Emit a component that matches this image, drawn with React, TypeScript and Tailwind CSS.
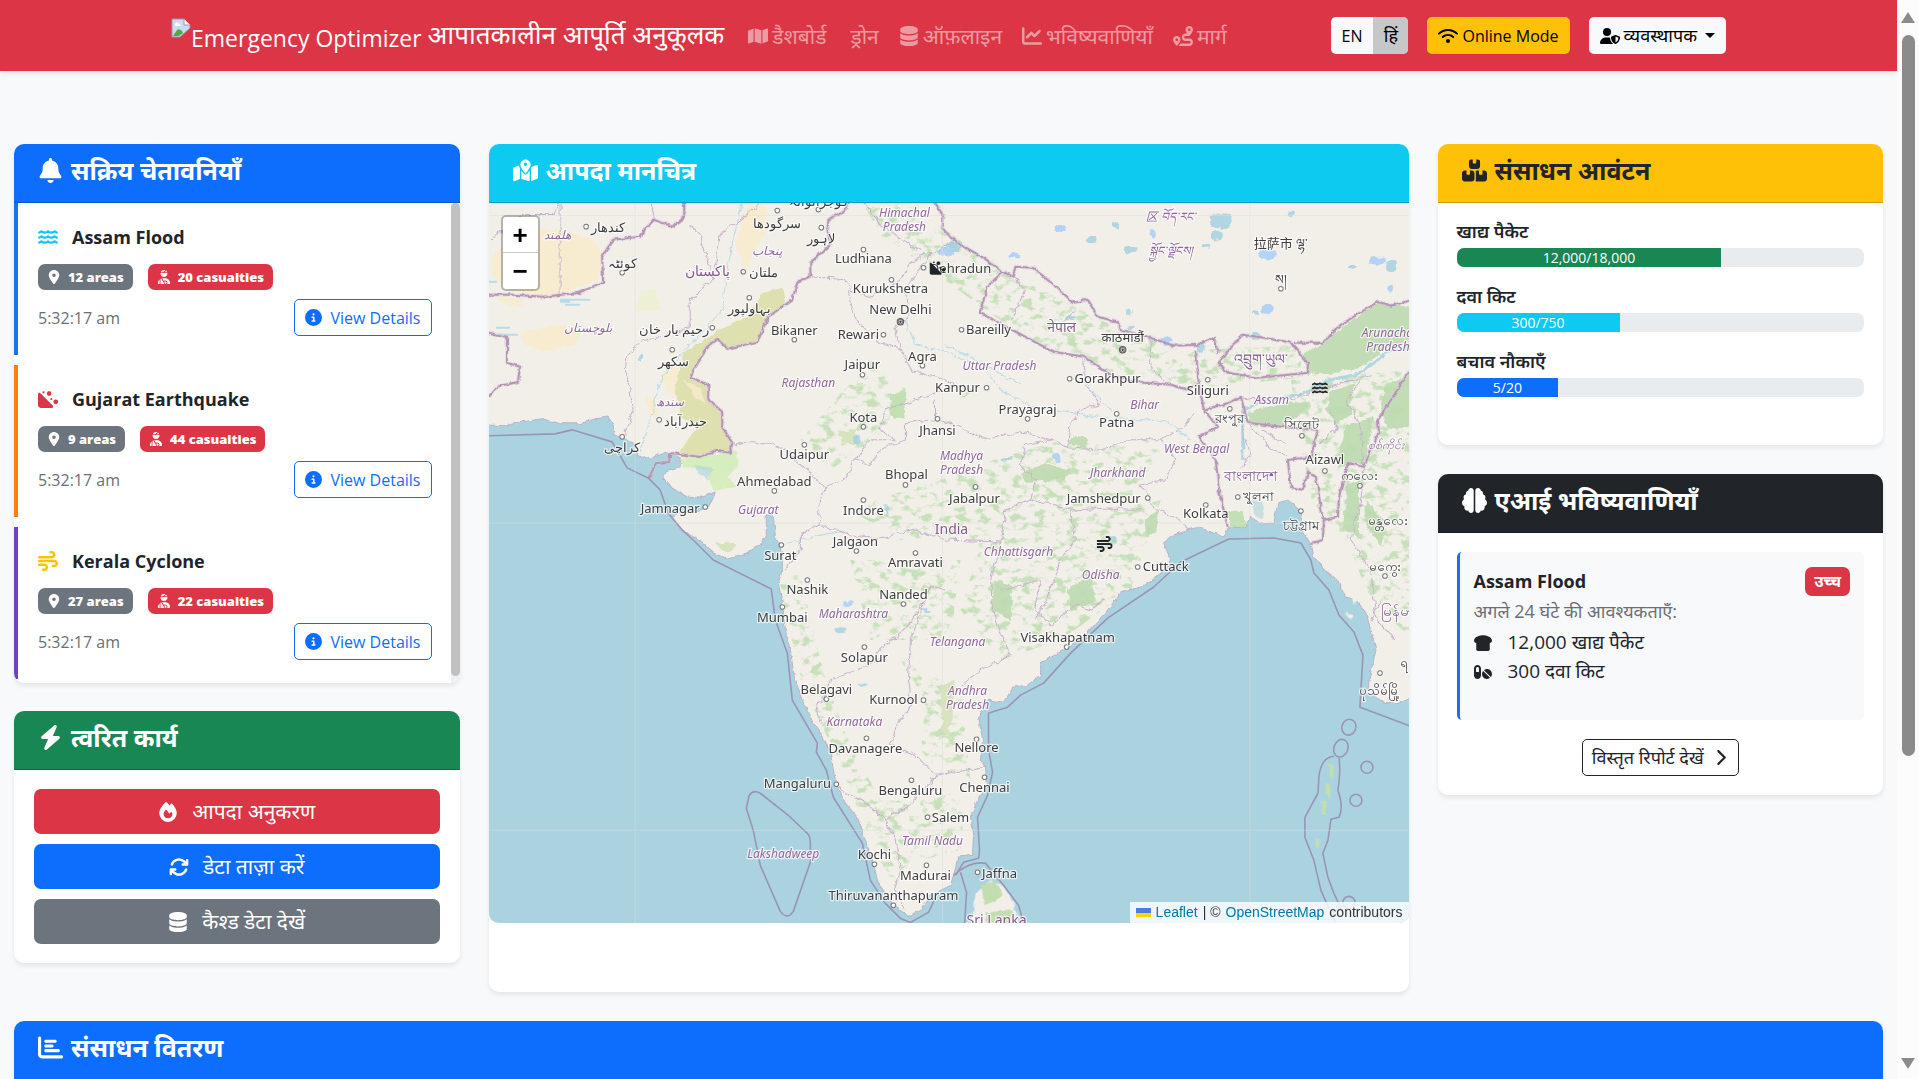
import React, { useState } from 'react';
import {
    FaArrowsRotate,
    FaBell,
    FaBolt,
    FaBoxesStacked,
    FaBrain,
    FaBreadSlice,
    FaChartBar,
    FaChartLine,
    FaChevronRight,
    FaCircleInfo,
    FaDatabase,
    FaFire,
    FaHillRockslide,
    FaLocationDot,
    FaMap,
    FaMapLocationDot,
    FaPills,
    FaRoute,
    FaUserInjured,
    FaUserShield,
    FaWater,
    FaWifi,
    FaWind
} from 'react-icons/fa6';

type LabelKind = 'city' | 'state' | 'country' | 'capital';
type MapLabel = [text: string, x: number, y: number, kind: LabelKind, dotX?: number, dotY?: number];

const mapLabels: MapLabel[] = [
    ['کندھار', 608, 228, 'city', 586, 227],
    ['هلمند', 557, 235, 'state'],
    ['کوئٹہ', 622, 264, 'city', 622, 273],
    ['پاکستان', 707, 272, 'country'],
    ['سرگودھا', 777, 224, 'city', 777, 211],
    ['گوجرانوالہ', 818, 202, 'city', 818, 210],
    ['لاہور', 821, 239, 'city', 821, 228],
    ['پنجاب', 767, 251, 'state'],
    ['ملتان', 763, 273, 'city', 743, 272],
    ['بہاولپور', 749, 309, 'city', 749, 298],
    ['رحیم یار خان', 674, 330, 'city', 712, 328],
    ['بلوچستان', 588, 328, 'state'],
    ['سکھر', 673, 362, 'city', 672, 350],
    ['سندھ', 670, 402, 'state'],
    ['حیدرآباد', 685, 422, 'city', 659, 420],
    ['کراچی', 622, 448, 'city', 622, 437],
    ['Himachal', 904, 213, 'state'],
    ['Pradesh', 904, 227, 'state'],
    ['Ludhiana', 863, 259, 'city', 863, 250],
    ['Kurukshetra', 890, 289, 'city', 891, 280],
    ['New Delhi', 900, 310, 'capital', 900, 322],
    ['Dehradun', 960, 269, 'city', 923, 268],
    ['Bikaner', 794, 331, 'city', 794, 340],
    ['Rewari', 858, 335, 'city', 883, 335],
    ['Agra', 922, 357, 'city', 922, 366],
    ['Jaipur', 862, 365, 'city', 862, 375],
    ['Rajasthan', 808, 383, 'state'],
    ['Kanpur', 957, 388, 'city', 986, 388],
    ['Kota', 863, 418, 'city', 863, 427],
    ['Jhansi', 937, 431, 'city', 937, 419],
    ['Udaipur', 804, 455, 'city', 804, 445],
    ['Madhya', 961, 456, 'state'],
    ['Pradesh', 961, 470, 'state'],
    ['Bhopal', 906, 475, 'city', 905, 485],
    ['Ahmedabad', 774, 482, 'city', 774, 491],
    ['Jamnagar', 670, 509, 'city', 705, 507],
    ['Gujarat', 758, 510, 'state'],
    ['Indore', 863, 511, 'city', 863, 500],
    ['Bareilly', 988, 330, 'city', 961, 330],
    ['नेपाल', 1061, 328, 'country'],
    ['काठमाडौं', 1122, 338, 'capital', 1122, 350],
    ['Uttar Pradesh', 999, 366, 'state'],
    ['Gorakhpur', 1107, 379, 'city', 1069, 379],
    ['Prayagraj', 1027, 410, 'city', 1027, 419],
    ['Patna', 1116, 423, 'city', 1116, 414],
    ['Bihar', 1144, 405, 'state'],
    ['Siliguri', 1207, 391, 'city', 1207, 380],
    ['Assam', 1271, 400, 'state'],
    ['রংপুর', 1229, 419, 'city', 1229, 409],
    ['সিলেট', 1301, 425, 'city', 1301, 436],
    ['Arunachal', 1388, 333, 'state'],
    ['Pradesh', 1387, 347, 'state'],
    ['འབྲུག་ཡུལ་', 1260, 360, 'country'],
    ['拉萨市 ལྷ་', 1280, 244, 'city'],
    ['ས།', 1280, 280, 'city', 1280, 289],
    ['区 བོད་རང་', 1170, 217, 'state'],
    ['སྐྱོང་ལྗོངས།', 1170, 251, 'state'],
    ['West Bengal', 1196, 449, 'state'],
    ['Jharkhand', 1117, 473, 'state'],
    ['Jabalpur', 974, 499, 'city', 975, 487],
    ['Jamshedpur', 1103, 499, 'city', 1147, 498],
    ['Kolkata', 1205, 514, 'city', 1205, 505],
    ['বাংলাদেশ', 1250, 477, 'country'],
    ['খুলনা', 1258, 497, 'city', 1237, 497],
    ['Aizawl', 1324, 460, 'city', 1324, 471],
    ['ကလေး', 1359, 476, 'city', 1359, 486],
    ['চট্টগ্রাম', 1300, 526, 'city', 1300, 511],
    ['မန္တလေး', 1387, 521, 'city'],
    ['မကွေး', 1384, 567, 'city', 1384, 576],
    ['စစ်ကိုင်း', 1385, 445, 'state'],
    ['India', 951, 530, 'country'],
    ['Chhattisgarh', 1018, 552, 'state'],
    ['Odisha', 1100, 575, 'state'],
    ['Cuttack', 1165, 567, 'city', 1137, 567],
    ['Jalgaon', 855, 542, 'city', 856, 551],
    ['Surat', 780, 556, 'city', 781, 545],
    ['Amravati', 915, 563, 'city', 915, 553],
    ['Nashik', 807, 590, 'city', 807, 580],
    ['Nanded', 903, 595, 'city', 903, 604],
    ['Mumbai', 782, 618, 'city', 782, 607],
    ['Maharashtra', 853, 614, 'state'],
    ['Solapur', 864, 658, 'city', 864, 647],
    ['Telangana', 957, 642, 'state'],
    ['Belagavi', 826, 690, 'city', 826, 699],
    ['Kurnool', 893, 700, 'city', 923, 700],
    ['Andhra', 967, 691, 'state'],
    ['Pradesh', 967, 705, 'state'],
    ['Karnataka', 854, 722, 'state'],
    ['Davanagere', 865, 749, 'city', 866, 738],
    ['Mangaluru', 797, 784, 'city', 836, 784],
    ['Bengaluru', 910, 791, 'city', 911, 780],
    ['Salem', 950, 818, 'city', 927, 817],
    ['Tamil Nadu', 932, 841, 'state'],
    ['Lakshadweep', 783, 854, 'state'],
    ['Kochi', 874, 855, 'city', 874, 864],
    ['Madurai', 925, 876, 'city', 926, 865],
    ['Thiruvananthapuram', 893, 896, 'city', 893, 905],
    ['Visakhapatnam', 1067, 638, 'city', 1066, 647],
    ['Nellore', 976, 748, 'city', 976, 739],
    ['Chennai', 984, 788, 'city', 984, 777],
    ['Jaffna', 999, 874, 'city', 977, 872],
    ['Sri Lanka', 996, 921, 'country'],
    ['မြန်မာ', 1397, 612, 'country'],
    ['ရ', 1403, 663, 'city'],
    ['ပုသိမ်မြို့', 1379, 691, 'city', 1379, 673]
];

const labelStyles: Record<LabelKind, string> = {
    city: 'fill-[#3d3d3d] text-[13px]',
    capital: 'fill-[#3d3d3d] text-[13px]',
    state: 'fill-[#91679a] text-[12px] italic',
    country: 'fill-[#855a8c] text-[14px]'
};

const countryBorders = [
    'M850 200L842 213 828 220 827 230 830 245 810 263 810 277 797 282 792 300 768 317 757 342 727 349 717 339 707 347 690 377 708 385 708 400 722 412 722 427 732 443 730 453 717 451 700 457 670 453 669 462 657 463 648 478',
    'M933 200L943 217 942 230 960 245 983 258 1002 272 1012 277 1015 267 1032 268 1053 285 1073 303 1087 300 1097 317 1117 322 1120 330 1147 337 1173 346 1197 345 1213 338 1218 353',
    'M1002 272L987 287 979 313 1017 333 1053 352 1083 357 1113 377 1143 383 1170 385 1187 390 1198 383 1195 350',
    'M1230 347L1242 335 1263 338 1290 343 1307 363 1307 373 1257 378 1227 373 1218 363Z',
    'M1293 343L1322 343 1340 325 1377 302 1390 306 1412 300',
    'M1198 383L1203 410 1225 404 1240 397 1247 423 1280 427 1317 430 1310 457 1287 460 1290 487 1302 490 1307 472 1315 477 1322 520',
    'M1203 410L1217 427 1198 437 1215 460 1218 490 1227 527',
    'M1412 366L1377 420 1378 432 1363 467 1347 463 1338 497 1337 517 1323 520 1322 540 1310 543',
    'M485 295L513 295 543 297 580 293 603 282 602 257 613 240 640 237 653 220 673 227 684 218 684 200',
    'M489 333L507 337 507 363 520 367 518 382 497 387 488 397'
];

const stateBorders = [
    'M625 435L633 410 625 360 640 342 690 328 690 300 713 280 720 235 765 200',
    'M560 296L560 200M520 215L555 215 560 200M490 240L520 215M713 280L700 235 690 225M650 200L655 220',
    'M810 277L845 280 850 292 870 297 900 280 910 262 925 255 880 225 862 200',
    'M848 292L855 320 880 343 900 350 895 325 908 318 905 290 930 255 950 243',
    'M900 350L912 372 940 378 955 385 930 395 885 410 880 430 895 440 870 440 855 460 870 465 880 450 905 440 905 423 935 420 935 400',
    'M732 443L765 443 785 450 800 465 815 478 825 488 845 478 855 460',
    'M825 488L818 510 820 525 800 535 800 550 783 570',
    'M820 525L850 535 880 538 915 530 945 540 1000 542 1005 510 1030 500 1035 480 1020 465 1025 445 1052 440',
    'M935 420L955 425 985 440 1020 432 1052 440 1068 448 1070 425 1080 410 1100 405 1085 385 1083 357',
    'M1068 448L1100 450 1130 440 1160 440 1185 425 1195 412M1160 440L1175 460 1165 480 1140 485 1155 510 1180 520 1187 530',
    'M1030 500L1070 510 1075 540 1060 560 1045 600 1035 620M1070 510L1110 508 1140 510',
    'M1000 542L990 580 992 610 1000 635 1010 655 980 670 960 685',
    'M1000 590L1040 580 1035 610 1050 625 1075 605 1090 610 1105 600',
    'M945 590L930 585 925 600 908 625 880 650 870 665 830 680 825 698 815 703 821 723',
    'M925 600L910 640 908 680 912 705 898 720 890 745 915 755 935 775 925 795',
    'M838 788L860 800 885 818 895 840 900 870 895 890 905 908',
    'M885 818L910 805 935 775 965 770 985 766',
    'M1240 397L1260 400 1290 400 1317 390 1350 380 1370 375M1247 423L1270 450 1285 455',
    'M1360 380L1345 400 1360 425 1363 467M1330 410L1335 430 1317 445M1363 467L1360 500 1350 540 1370 570 1375 620 1395 640M1370 620L1380 600',
    'M1005 272L1025 290 1010 320M1055 330L1075 310M1150 340L1150 365 1165 385M1240 425L1250 455 1240 470M1262 430L1285 445'
];

const maritimeBorders = [
    'M485 436L555 434 572 430 612 442 627 468 648 478 660 490 668 513 682 530 693 540 713 560 771 589 775 620 787 653 792 700 817 743 816 752 826 770 833 797 862 843 870 880 885 903 900 918 910 922 928 912 935 897',
    'M955 875L963 862 978 858 979 850 977 817 987 795 992 772 988 750 988 713 1007 707 1020 695 1043 683 1070 653 1107 618 1153 587 1180 562 1228 539 1273 538 1300 543 1310 560 1313 573 1328 590 1338 615 1353 632 1362 655 1359 707 1412 727',
    'M760 793L788 815 808 834Q810 837 810 842L810 862 793 911Q787 920 780 911L760 865 753 830 746 808 749 795Q753 789 760 793Z',
    'M1333 756Q1320 757 1318 777L1317 793 1304 817 1304 837 1313 860 1320 890 1336 926M1338 758Q1340 770 1337 790 1343 807 1338 817L1330 819 1327 840 1322 853 1327 877 1333 893 1342 912',
    'M953 875Q970 860 985 863L992 872 1003 885 1018 905 1024 926M960 872L966 892 964 926'
];

const leafyAreas = [
    'M1307 375L1300 355 1320 345 1345 325 1378 303 1412 306 1412 340 1385 350 1360 368 1330 374Z',
    'M1247 412L1275 405 1310 402 1300 415 1280 427 1247 425Z',
    'M1412 372L1385 385 1378 410 1390 430 1412 425Z',
    'M1330 390L1352 385 1350 415 1335 425 1325 410Z',
    'M1345 425L1372 418 1364 465 1346 462 1336 470Z',
    'M1345 485L1358 480 1358 535 1342 530Z',
    'M1020 473L1045 463 1072 472 1060 480 1025 482Z',
    'M1072 435L1087 440 1085 448 1070 445Z',
    'M1145 520L1157 508 1156 532 1146 538Z',
    'M995 580L1012 585 1010 620 990 610Z',
    'M1067 590L1090 575 1095 600 1070 612Z',
    'M1365 500L1385 525 1380 545 1362 520Z'
];

const speckledAreas = [
    'M862 203L900 200 945 230 990 262 1060 300 1120 330 1200 350 1300 345 1300 378 1200 388 1110 372 1020 335 930 270 880 235Z',
    'M778 575L800 575 825 680 850 745 880 800 910 800 925 830 895 890 870 840 838 760 800 680Z',
    'M960 500L1060 520 1160 500 1130 590 1060 640 1000 660 960 610 975 560Z',
    'M850 510L960 470 1060 440 1160 450 1130 500 1000 530 900 540Z',
    'M800 440L870 360 900 390 885 430 830 470Z',
    'M900 660L960 690 970 780 920 760 925 700Z',
    'M920 800L965 790 960 850 920 860Z',
    'M1290 380L1412 370 1412 640 1370 600 1345 540 1310 500Z',
    'M978 882L1010 895 1020 926 968 926Z',
    'M850 560L960 560 950 640 870 640Z'
];

const lakes = [
    [945, 252, 9, 4], [955, 246, 7, 5], [1115, 226, 3, 4], [1060, 229, 6, 3], [1090, 240, 6, 3], [1130, 250, 7, 4],
    [1152, 234, 3, 5], [1220, 221, 11, 8], [1216, 236, 5, 5], [1266, 254, 9, 6], [1290, 214, 4, 3], [1205, 247, 5, 2],
    [1377, 261, 9, 4], [1390, 266, 5, 5], [1350, 268, 5, 3], [1389, 289, 3, 3], [1129, 313, 3, 4], [1070, 318, 6, 2],
    [1165, 341, 7, 4], [1200, 348, 5, 5], [1255, 336, 6, 3], [1014, 256, 6, 3], [950, 245, 6, 3], [1255, 313, 3, 2],
    [1266, 309, 6, 5], [1130, 328, 4, 3], [640, 358, 2, 4], [847, 603, 5, 3], [840, 630, 6, 3], [862, 685, 5, 2],
    [927, 610, 4, 2], [857, 441, 4, 5], [886, 510, 2, 6], [1056, 458, 4, 4], [1006, 459, 6, 2], [1112, 540, 4, 3]
];

const DisasterMap = () => (
    <svg
        className="block h-full w-full select-none"
        viewBox="489 203 919 720"
        preserveAspectRatio="xMidYMid slice"
        role="img"
        aria-label="आपदा मानचित्र"
    >
        <defs>
            <filter id="rough" x="-5%" y="-5%" width="110%" height="110%">
                <feTurbulence type="fractalNoise" baseFrequency="0.12" numOctaves={3} seed={4} />
                <feDisplacementMap in="SourceGraphic" scale={7} xChannelSelector="R" yChannelSelector="G" />
            </filter>
            <filter id="coast" x="-5%" y="-5%" width="110%" height="110%">
                <feTurbulence type="fractalNoise" baseFrequency="0.15" numOctaves={3} seed={9} />
                <feDisplacementMap in="SourceGraphic" scale={4} xChannelSelector="R" yChannelSelector="G" />
            </filter>
            <filter id="speckle" x="0" y="0" width="100%" height="100%" colorInterpolationFilters="sRGB">
                <feTurbulence type="fractalNoise" baseFrequency="0.09 0.13" numOctaves={5} seed={7} />
                <feColorMatrix values="0 0 0 0 0.78  0 0 0 0 0.88  0 0 0 0 0.73  6 0 0 0 -3.1" />
                <feComposite in2="SourceGraphic" operator="in" />
            </filter>
        </defs>

        <rect x={480} y={195} width={940} height={740} fill="#f2efe9" />

        {/* deserts and dry basins */}
        <g filter="url(#coast)">
            <path fill="#f7ecd0" d="M492 257L523 227 563 230 593 240 602 253 598 280 573 290 540 296 510 290 493 277ZM748 205L766 206 765 232 745 270 735 245ZM520 332L560 325 580 333 575 345 545 352 525 345ZM498 297L522 300 520 308 500 302ZM660 375L678 365 680 400 668 392ZM645 395L655 400 658 420 650 415Z" />
            <path fill="#dee0b0" d="M782 288L763 293 747 317 720 330 683 353 675 387 680 417 697 427 680 450 680 456 700 457 717 451 732 452 732 443 722 427 722 412 708 400 708 385 690 377 707 347 717 339 727 349 757 342 768 317 785 305Z" />
            <path fill="#d5edbf" d="M680 458L703 457 737 450 737 467 727 477 737 487 713 490 707 470 683 467Z" />
            <path fill="#eef0d5" d="M640 292L655 288 660 310 635 312Z" />
            <path fill="#f5e8c8" d="M683 380L700 388 705 403 695 398Z" />
        </g>

        <path fill="#c2dfb3" filter="url(#speckle)" d={speckledAreas.join('')} />
        <path fill="#bddbb0" opacity={0.9} filter="url(#rough)" d={leafyAreas.join('')} />
        <g filter="url(#rough)" fill="#c3dfb4">
            <path d="M890 395L905 390 903 420 888 415ZM970 390L975 393 960 400ZM1228 510L1243 510 1245 528 1228 528Z" />
            <path fill="#d8e2bc" d="M838 432L855 430 858 445 842 445ZM716 543L735 543 732 552 720 550ZM940 685L955 680 948 740 942 730Z" />
        </g>

        {/* rivers */}
        <g fill="none" stroke="#b9dbe6" strokeWidth={1}>
            <path filter="url(#rough)" d="M742 203L728 260 722 310 690 345 660 380 650 420 640 450M905 320L915 345 945 352 985 370 1000 390 1035 408 1080 415 1120 420 1165 420 1190 440M1080 357L1090 390 1110 410M945 345L975 360 1020 385M780 545L820 535 850 530" />
            <path strokeWidth={3} stroke="#b0d7e3" filter="url(#coast)" d="M1242 410L1265 400 1300 395 1330 380 1355 375 1375 362 1385 352 1412 345M1242 410L1242 460" />
            <path strokeWidth={2} d="M560 300h30M565 305h15M496 328h14M498 335h20M560 302h10M489 282h8" />
        </g>

        <path
            fill="#aad3df"
            stroke="#b8b4c8"
            strokeWidth={1}
            filter="url(#coast)"
            d="M480 425L507 426 523 422 542 419 560 424 580 424 595 419 608 417 613 425 615 435 622 438 633 442 638 455 650 458 667 452 680 458 680 467 667 470 663 478 670 487 687 497 700 498 715 492 713 498 708 507 693 512 677 513 672 517 680 530 695 537 713 553 727 559 743 555 760 545 766 535 766 515 773 515 775 537 780 547 782 557 782 570 778 583 782 603 785 630 790 650 794 677 802 700 813 723 823 737 830 753 835 780 845 803 857 817 865 840 872 860 878 883 893 905 908 916 922 908 930 895 950 885 955 868 957 857 972 855 973 833 970 817 977 800 986 787 985 767 980 760 982 740 978 717 988 700 1003 702 1012 687 1027 685 1040 675 1040 663 1063 650 1087 633 1107 610 1120 593 1140 587 1157 577 1170 560 1163 543 1173 535 1197 527 1223 537 1228 527 1245 528 1250 517 1260 524 1273 523 1277 503 1287 500 1300 510 1303 533 1310 543 1313 557 1327 573 1337 580 1345 597 1355 600 1365 613 1370 630 1375 650 1368 680 1367 693 1383 702 1397 703 1416 696 1416 935 480 935Z"
        />
        <g filter="url(#coast)">
            <path fill="#f2efe9" d="M990 880L1002 885 1013 903 1020 930 968 930 973 910 975 893ZM1344 612L1353 615 1350 620ZM1350 590L1357 600 1352 605Z" />
            <path fill="#aad3df" d="M695 465L712 468 708 480 698 474ZM1250 500L1262 502 1262 520 1254 515Z" opacity={0.6} />
            <path fill="#c2deb0" d="M1328 763h4l1 12-4 5zM1325 782l5 2-1 14-5-4zM1321 800l5 1-2 14-4-2zM1315 838l4 1-1 9-3-2zM980 885L995 880 1003 895 985 905ZM985 912L1012 910 1012 923 985 923Z" />
        </g>

        {lakes.map(([x, y, rx, ry], index) => (
            <ellipse key={index} cx={x} cy={y} rx={rx} ry={ry} fill={index % 3 ? '#a3d0e0' : '#a5ccf8'} opacity={0.8} filter="url(#rough)" />
        ))}

        <g fill="none" strokeLinejoin="round">
            <path stroke="#c6b2cc" strokeWidth={1} filter="url(#rough)" d={stateBorders.join('')} />
            <path stroke="#d9c9dc" strokeWidth={4} opacity={0.5} filter="url(#coast)" d={countryBorders.join('')} />
            <path stroke="#b597b4" strokeWidth={2} filter="url(#coast)" d={countryBorders.join('')} />
            <g stroke="#9a95b6" strokeWidth={1.6}>
                <path d={maritimeBorders.join('')} />
                <ellipse cx={1348} cy={727} rx={7} ry={8} transform="rotate(20 1348 727)" />
                <ellipse cx={1340} cy={748} rx={7} ry={9} transform="rotate(20 1340 748)" />
                <circle cx={1366} cy={767} r={6} />
                <circle cx={1355} cy={800} r={6} />
                <circle cx={1348} cy={902} r={6} />
            </g>
            {/* tile seams */}
            <path stroke="#dcdcdc" strokeWidth={1} opacity={0.45} d="M635 203V923M942 203V923M1249 203V923M489 216H1408M489 523H1408M489 830H1408" />
        </g>

        {mapLabels.map(([text, x, y, kind, dotX, dotY]) => (
            <g key={`${text}-${x}-${y}`}>
                {dotX && <circle cx={dotX} cy={dotY} r={2.3} fill="#fff" stroke="#7a7a7a" strokeWidth={1} />}
                {kind === 'capital' && <circle cx={dotX} cy={dotY} r={3.2} fill="none" stroke="#555" strokeWidth={1} />}
                {kind === 'capital' && <circle cx={dotX} cy={dotY} r={1.2} fill="#444" />}
                <text
                    x={x}
                    y={y + 4}
                    textAnchor="middle"
                    paintOrder="stroke"
                    stroke="#ffffff"
                    strokeOpacity={0.7}
                    strokeWidth={2.5}
                    strokeLinejoin="round"
                    className={`font-['Noto_Sans','Noto_Sans_CJK_SC',sans-serif] ${labelStyles[kind]}`}
                >
                    {text}
                </text>
            </g>
        ))}

        <FaHillRockslide x={929} y={260} width={18} height={16} color="#212529" />
        <FaWater x={1311} y={380} width={18} height={16} color="#212529" />
        <FaWind x={1096} y={536} width={16} height={16} color="#212529" />
    </svg>
);

const BrokenImage = () => (
    <svg className="h-5 w-5 shrink-0" viewBox="0 0 20 20" aria-hidden="true">
        <path d="M1 1h12l6 6v3L9 19H1z" fill="#c9dcf7" stroke="#9a9a9a" />
        <path d="M13 1v6h6" fill="#fff" stroke="#9a9a9a" />
        <path d="M4 7a2 2 0 0 1 4-1 2 2 0 0 1 2 2H4z" fill="#fff" />
        <path d="M2 18l4-6q2-2 5 1l1 2-4 3z" fill="#59a839" />
    </svg>
);

type CardProps = {
    icon: React.ReactNode;
    title: string;
    headerClass: string;
    className?: string;
    children?: React.ReactNode;
};

const Card = ({ icon, title, headerClass, className = '', children }: CardProps) => (
    <section className={`overflow-hidden rounded-[10px] bg-white shadow-[0_3px_5px_rgba(0,0,0,0.08)] ${className}`}>
        <div className={`flex h-[59px] items-center gap-2 border-b border-black/20 px-6 pb-1.5 ${headerClass}`}>
            {icon}
            <h5 className="text-[25px] leading-[30px] font-bold">{title}</h5>
        </div>
        {children}
    </section>
);

const navLinks = [
    { label: 'डैशबोर्ड', icon: <FaMap className="h-5 w-auto" /> },
    { label: 'ड्रोन', icon: <span /> },
    { label: 'ऑफ़लाइन', icon: <FaDatabase className="h-5 w-auto" /> },
    { label: 'भविष्यवाणियाँ', icon: <FaChartLine className="h-5 w-auto" /> },
    { label: 'मार्ग', icon: <FaRoute className="h-5 w-auto" /> }
];

const alerts = [
    {
        name: 'Assam Flood',
        areas: 12,
        casualties: 20,
        border: 'border-[#1a73e8]',
        icon: <FaWater className="h-5 w-auto text-[#0dcaf0]" />
    },
    {
        name: 'Gujarat Earthquake',
        areas: 9,
        casualties: 44,
        border: 'border-[#fd7e14]',
        icon: <FaHillRockslide className="h-5 w-auto text-[#dc3545]" />
    },
    {
        name: 'Kerala Cyclone',
        areas: 27,
        casualties: 22,
        border: 'border-[#6f42c1]',
        icon: <FaWind className="h-5 w-auto text-[#ffc107]" />
    }
];

const resources = [
    { label: 'खाद्य पैकेट', value: '12,000/18,000', percent: 65, color: 'bg-[#198754]' },
    { label: 'दवा किट', value: '300/750', percent: 40, color: 'bg-[#0dcaf0]' },
    { label: 'बचाव नौकाएँ', value: '5/20', percent: 25, color: 'bg-[#0d6efd]' }
];

const actions = [
    { label: 'आपदा अनुकरण', color: 'bg-[#dc3545]', icon: <FaFire className="h-5 w-auto" /> },
    { label: 'डेटा ताज़ा करें', color: 'bg-[#0d6efd]', icon: <FaArrowsRotate className="h-5 w-auto" /> },
    { label: 'कैश्ड डेटा देखें', color: 'bg-[#6c757d]', icon: <FaDatabase className="h-5 w-auto" /> }
];

const Navbar = () => {
    const [lang, setLang] = useState<'en' | 'hi'>('hi');

    return (
        <nav className="relative h-[71px] bg-[#dc3545] shadow-[0_3px_5px_rgba(0,0,0,0.08)]">
            <div className="mx-auto flex h-full max-w-[1555px] items-center">
                <a href="#" className="flex items-start text-white">
                    <BrokenImage />
                    <span className="pt-1 text-[23px] leading-8">Emergency Optimizer</span>
                    <span className="ml-1.5 text-[26px] leading-8">आपातकालीन आपूर्ति अनुकूलक</span>
                </a>
                <div className="ml-6 flex items-center gap-5 text-white/50">
                    {navLinks.map((link) => (
                        <a key={link.label} href="#" className="flex items-center gap-1 text-[21px] leading-8">
                            {link.icon}
                            {link.label}
                        </a>
                    ))}
                </div>
                <div className="ml-auto flex items-center gap-[19px] text-[16px] text-black">
                    <div className="flex h-[37px] overflow-hidden rounded-[5px] bg-[#f8f9fa]">
                        <button onClick={() => setLang('en')} className={`px-[11px] ${lang === 'en' ? 'bg-[#c6c7c8]' : ''}`}>
                            EN
                        </button>
                        <button onClick={() => setLang('hi')} className={`w-[35px] text-[18px] ${lang === 'hi' ? 'bg-[#c6c7c8]' : ''}`}>
                            हिं
                        </button>
                    </div>
                    <button className="flex h-[37px] items-center gap-1 rounded-[5px] bg-[#ffc107] px-[11px]">
                        <FaWifi className="h-5 w-auto" />
                        Online Mode
                    </button>
                    <button className="flex h-[37px] items-center gap-1 rounded-[5px] bg-[#f8f9fa] px-[11px] text-[18px]">
                        <FaUserShield className="h-5 w-auto" />
                        व्यवस्थापक
                        <span className="ml-1 border-x-[5px] border-t-[5px] border-x-transparent border-t-black" />
                    </button>
                </div>
            </div>
        </nav>
    );
};

const AlertList = () => (
    <div className="flex h-[480px] overflow-hidden">
        <div className="flex-1 space-y-[10px]">
            {alerts.map((alert) => (
                <article key={alert.name} className={`border-l-4 pt-5 pr-[19px] pb-[19px] pl-5 ${alert.border}`}>
                    <h6 className="mb-[13px] flex items-center gap-[14px] text-[18px] leading-7 font-bold">
                        {alert.icon}
                        {alert.name}
                    </h6>
                    <div className="flex gap-[15px] text-[13px] leading-[26px] font-extrabold text-white">
                        <span className="flex items-center gap-[7px] rounded-[7px] bg-[#6c757d] px-[9px]">
                            <FaLocationDot className="h-[14px] w-auto" />
                            {alert.areas} areas
                        </span>
                        <span className="flex items-center gap-[7px] rounded-[7px] bg-[#dc3545] px-[9px]">
                            <FaUserInjured className="h-[14px] w-auto" />
                            {alert.casualties} casualties
                        </span>
                    </div>
                    <div className="mt-[9px] flex items-center justify-between text-[16px]">
                        <span className="text-[#6a6f74]">5:32:17 am</span>
                        <button className="flex h-[37px] items-center gap-2 rounded-[5px] border border-[#0d6efd] px-[10px] text-[#0d6efd]">
                            <FaCircleInfo className="h-[17px] w-auto" />
                            View Details
                        </button>
                    </div>
                </article>
            ))}
        </div>
        <div className="w-[9px] bg-[#f1f1f1]">
            <div className="h-[473px] rounded-full bg-[#c1c1c1]" />
        </div>
    </div>
);

const App = () => (
    <div className="flex h-screen overflow-hidden bg-[#f8f9fb] font-['Open_Sans','Noto_Sans',sans-serif] text-[#212529]">
        <div className="min-w-0 flex-1">
            <Navbar />
            <main className="px-[14px] pt-[73px]">
                <div className="grid grid-cols-4 items-start gap-[29px]">
                    <div className="space-y-7">
                        <Card title="सक्रिय चेतावनियाँ" headerClass="bg-[#0d6efd] text-white" icon={<FaBell className="h-[25px] w-auto" />}>
                            <AlertList />
                        </Card>
                        <Card title="त्वरित कार्य" headerClass="bg-[#198754] text-white" icon={<FaBolt className="h-[25px] w-auto" />}>
                            <div className="flex flex-col gap-[10px] px-5 py-[19px]">
                                {actions.map((action) => (
                                    <button
                                        key={action.label}
                                        className={`flex h-[45px] items-center justify-center gap-[14px] rounded-[7px] text-[21px] text-white ${action.color}`}
                                    >
                                        {action.icon}
                                        {action.label}
                                    </button>
                                ))}
                            </div>
                        </Card>
                    </div>

                    <Card
                        title="आपदा मानचित्र"
                        className="col-span-2 pb-[69px]"
                        headerClass="bg-[#0dcaf0] text-white"
                        icon={<FaMapLocationDot className="h-[25px] w-auto" />}
                    >
                        <div className="relative h-[720px] overflow-hidden rounded-b-[10px] bg-[#aad3df]">
                            <DisasterMap />
                            <div className="absolute top-3 left-3 flex w-[39px] flex-col overflow-hidden rounded-[5px] border-2 border-black/25 bg-white bg-clip-padding font-['Liberation_Sans',sans-serif] text-[26px] leading-none font-bold text-black">
                                <button aria-label="Zoom in" className="h-9 border-b border-[#ccc]">+</button>
                                <button aria-label="Zoom out" className="h-9">−</button>
                            </div>
                            <div className="absolute right-0 bottom-0 flex h-[21px] items-center gap-[5px] bg-white/80 px-[6px] font-['Liberation_Sans',sans-serif] text-[14px] text-[#333]">
                                <svg className="h-[9px] w-[15px]" viewBox="0 0 15 9" aria-hidden="true">
                                    <path fill="#4c7be1" d="M0 0h15v5H0z" />
                                    <path fill="#ffd500" d="M0 5h15v4H0z" />
                                </svg>
                                <a href="#" className="text-[#0078a8]">Leaflet</a>
                                <span>| ©</span>
                                <a href="#" className="text-[#0078a8]">OpenStreetMap</a>
                                <span>contributors</span>
                            </div>
                        </div>
                    </Card>

                    <div className="space-y-[29px]">
                        <Card title="संसाधन आवंटन" headerClass="bg-[#ffc107]" icon={<FaBoxesStacked className="h-[25px] w-auto" />}>
                            <div className="space-y-5 px-[19px] pt-[19px] pb-12">
                                {resources.map((item) => (
                                    <div key={item.label}>
                                        <h6 className="h-[26px] text-[18px] leading-[18px] font-semibold">{item.label}</h6>
                                        <div className="h-[19px] overflow-hidden rounded-[7px] bg-[#e9ecef]">
                                            <div
                                                className={`h-full text-center text-[14px] leading-[19px] text-white ${item.color}`}
                                                style={{ width: `${item.percent}%` }}
                                            >
                                                {item.value}
                                            </div>
                                        </div>
                                    </div>
                                ))}
                            </div>
                        </Card>

                        <Card title="एआई भविष्यवाणियाँ" headerClass="bg-[#212529] text-white" icon={<FaBrain className="h-[25px] w-auto" />}>
                            <div className="p-[19px]">
                                <div className="h-[168px] rounded-[5px] border-l-[3px] border-[#1a73e8] bg-[#f8f9fa] px-[14px] pt-[14px]">
                                    <div className="flex h-[30px] items-center justify-between">
                                        <h6 className="text-[18px] font-bold">Assam Flood</h6>
                                        <span className="rounded-[7px] bg-[#dc3545] px-[9px] text-[16px] leading-[29px] font-bold text-white">उच्च</span>
                                    </div>
                                    <p className="text-[18px] leading-[30px] text-[#6a6f74]">अगले 24 घंटे की आवश्यकताएँ:</p>
                                    <ul className="mt-0.5 text-[19px] leading-[29px]">
                                        <li className="flex items-center gap-4">
                                            <FaBreadSlice className="h-[18px] w-auto" />
                                            12,000 खाद्य पैकेट
                                        </li>
                                        <li className="flex items-center gap-4">
                                            <FaPills className="h-[18px] w-auto" />
                                            300 दवा किट
                                        </li>
                                    </ul>
                                </div>
                                <button className="mx-auto mt-[19px] flex h-[37px] items-center gap-2 rounded-[5px] border border-[#212529] px-[9px] text-[18px]">
                                    विस्तृत रिपोर्ट देखें
                                    <FaChevronRight className="h-[17px] w-auto" />
                                </button>
                            </div>
                        </Card>
                    </div>
                </div>

                <Card
                    title="संसाधन वितरण"
                    className="mt-[29px]"
                    headerClass="bg-[#0d6efd] text-white"
                    icon={<FaChartBar className="h-[25px] w-auto" />}
                >
                    <div className="h-80" />
                </Card>
            </main>
        </div>

        {/* page scrollbar */}
        <div className="flex w-[22px] flex-col items-center bg-[#fcfcfc] pt-3 pb-[10px]" aria-hidden="true">
            <span className="border-x-[7px] border-b-[11px] border-x-transparent border-b-[#8b8b8b]" />
            <span className="mt-3 h-[721px] w-[13px] rounded-full bg-[#8b8b8b]" />
            <span className="mt-auto border-x-[7px] border-t-[11px] border-x-transparent border-t-[#8b8b8b]" />
        </div>
    </div>
);

export default App;
